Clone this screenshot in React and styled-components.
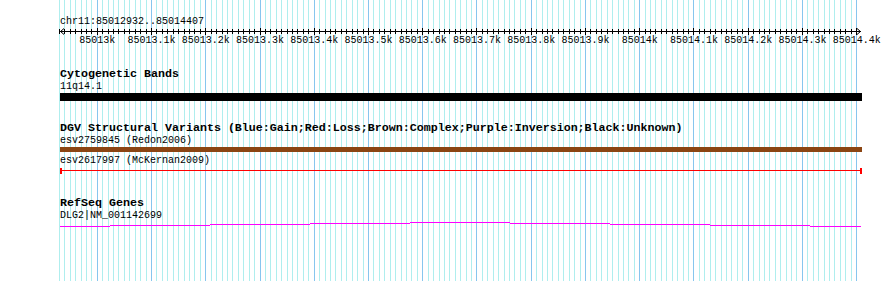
import React from "react";
import styled, { createGlobalStyle } from "styled-components";

// scale: x of 85013000 and pixels per base
const ORIGIN_X = 97.3;
const PX_PER_BP = 0.5424;
const LEFT = 60;
const toX = (bp) => ORIGIN_X + (bp - 85013000) * PX_PER_BP;

const GlobalStyle = createGlobalStyle`
  html, body {
    margin: 0;
    padding: 0;
    background: #ffffff;
  }
  body {
    font-family: "Liberation Mono", "DejaVu Sans Mono", monospace;
    color: #000;
  }
`;

const Page = styled.div`
  position: relative;
  width: 890px;
  height: 281px;
  overflow: hidden;
  background: #ffffff;
`;

const GridLayer = styled.svg`
  position: absolute;
  left: 0;
  top: 0;
`;

const Tracks = styled.div`
  position: relative;
  padding-left: ${LEFT}px;
  width: 802px;
  display: flex;
  flex-direction: column;
`;

const Location = styled.div`
  margin-top: 16px;
  font-size: 10px;
  line-height: 12px;
  white-space: pre;
`;

const RulerSvg = styled.svg`
  display: block;
  overflow: visible;
`;

const Track = styled.section`
  display: flex;
  flex-direction: column;
  margin-top: ${(p) => p.$gap}px;
`;

const TrackTitle = styled.div`
  font-size: 11.67px;
  font-weight: bold;
  line-height: 13px;
  white-space: pre;
`;

const FeatureLabel = styled.div`
  font-size: 10px;
  line-height: 12px;
  white-space: pre;
  margin-top: ${(p) => p.$gap || 0}px;
`;

const Bar = styled.div`
  width: 802px;
  height: ${(p) => p.$height}px;
  background: ${(p) => p.$color};
`;

const LineSvg = styled.svg`
  display: block;
  margin-top: ${(p) => p.$gap || 0}px;
`;

const gridLines = [];
for (let bp = 85012930; bp <= 85014400; bp += 10) {
  gridLines.push({ x: Math.floor(toX(bp)), major: bp % 100 === 0 });
}

const rulerLabels = [];
for (let i = 0; i <= 14; i++) {
  const bp = 85013000 + i * 100;
  const k = bp / 1000;
  const text = i % 10 === 0 ? `${k}k` : `${k.toFixed(1)}k`;
  rulerLabels.push({ x: toX(bp) - LEFT, text });
}

const geneSteps = [
  [60, 110, 6],
  [110, 210, 5],
  [210, 310, 4],
  [310, 410, 3],
  [410, 510, 2],
  [510, 610, 3],
  [610, 710, 4],
  [710, 810, 5],
  [810, 861, 6],
];

const Grid = () => (
  <GridLayer width="890" height="281" shapeRendering="crispEdges">
    {gridLines.map((l) => (
      <rect
        key={l.x}
        x={l.x}
        y="0"
        width="1"
        height="281"
        fill={l.major ? "#87c6ee" : "#afeeee"}
      />
    ))}
  </GridLayer>
);

const Ruler = () => (
  <RulerSvg width="802" height="18">
    <g shapeRendering="crispEdges">
      <rect x="0" y="3" width="801" height="1" fill="#000" />
      {gridLines.map((l) => (
        <rect
          key={l.x}
          x={l.x - LEFT}
          y={l.major ? 0 : 1}
          width="1"
          height={l.major ? 7 : 5}
          fill="#000"
        />
      ))}
    </g>
    <polyline points="4,0.5 0.5,3.5 4,6.5" fill="none" stroke="#000" strokeWidth="1" />
    <polyline points="797,0.5 800.5,3.5 797,6.5" fill="none" stroke="#000" strokeWidth="1" />
    {rulerLabels.map((l) => (
      <text
        key={l.text}
        x={l.x}
        y="15.3"
        textAnchor="middle"
        fontFamily='"Liberation Mono", monospace'
        fontSize="10"
        fill="#000"
      >
        {l.text}
      </text>
    ))}
  </RulerSvg>
);

const RangeLine = () => (
  <LineSvg width="802" height="7" shapeRendering="crispEdges">
    <rect x="0" y="3" width="802" height="1" fill="#ff0000" />
    <rect x="0" y="1" width="2" height="6" fill="#ff0000" />
    <rect x="800" y="1" width="2" height="6" fill="#ff0000" />
  </LineSvg>
);

const GeneLine = () => (
  <LineSvg width="802" height="8" $gap={-2} shapeRendering="crispEdges">
    {geneSteps.map(([a, b, y]) => (
      <rect key={a} x={a - LEFT} y={y} width={b - a} height="1" fill="#ff00ff" />
    ))}
  </LineSvg>
);

export default function App() {
  return (
    <>
      <GlobalStyle />
      <Page>
        <Grid />
        <Tracks>
          <Location>chr11:85012932..85014407</Location>
          <Ruler />

          <Track $gap={22}>
            <TrackTitle>Cytogenetic Bands</TrackTitle>
            <FeatureLabel>11q14.1</FeatureLabel>
            <Bar $height={8} $color="#000000" />
          </Track>

          <Track $gap={21}>
            <TrackTitle>
              DGV Structural Variants (Blue:Gain;Red:Loss;Brown:Complex;Purple:Inversion;Black:Unknown)
            </TrackTitle>
            <FeatureLabel>esv2759845 (Redon2006)</FeatureLabel>
            <Bar $height={5} $color="#8b4513" />
            <FeatureLabel $gap={3}>esv2617997 (McKernan2009)</FeatureLabel>
            <RangeLine />
          </Track>

          <Track $gap={23}>
            <TrackTitle>RefSeq Genes</TrackTitle>
            <FeatureLabel>DLG2|NM_001142699</FeatureLabel>
            <GeneLine />
          </Track>
        </Tracks>
      </Page>
    </>
  );
}
